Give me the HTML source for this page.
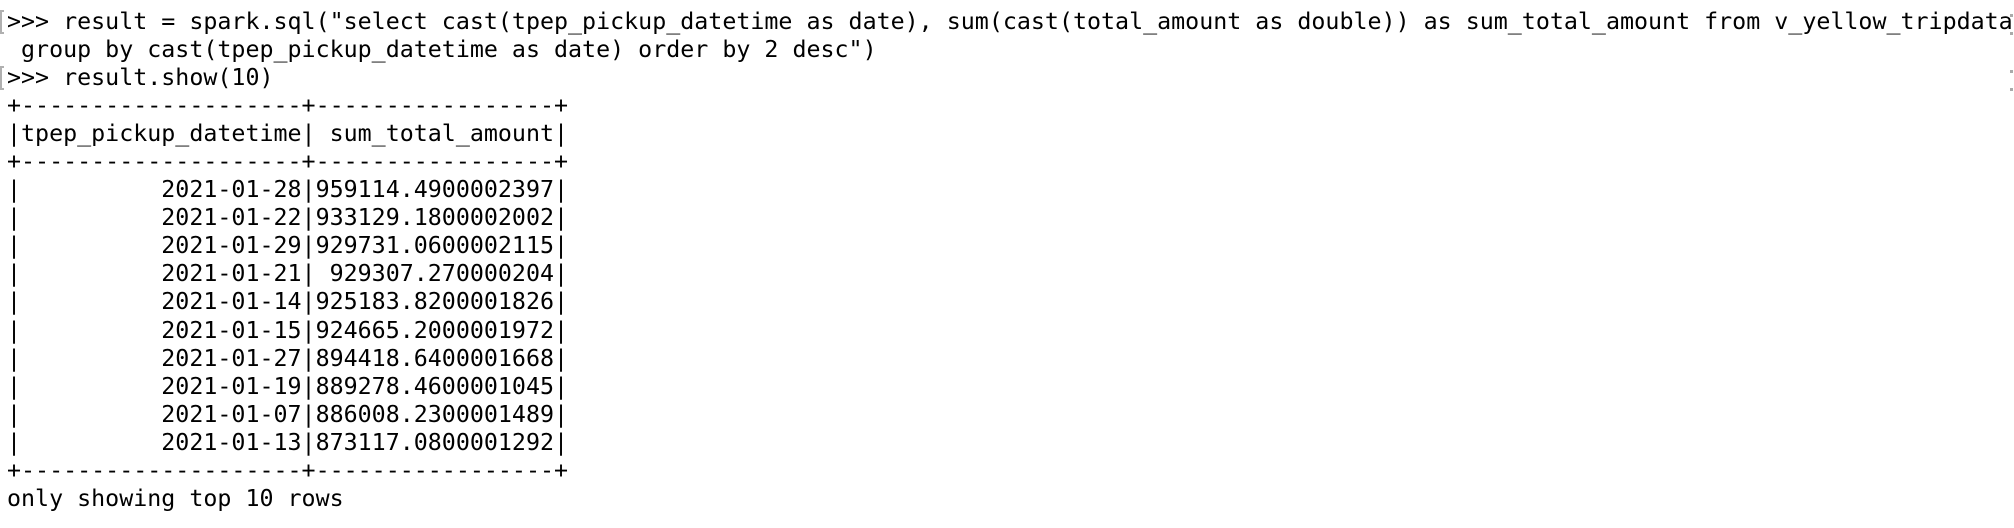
<!DOCTYPE html>
<html><head><meta charset="utf-8"><style>
html,body{margin:0;padding:0;background:#fff;width:2014px;height:528px;overflow:hidden;position:relative}
pre{margin:0;position:absolute;left:7px;top:8px;font-family:"DejaVu Sans Mono","Liberation Mono",monospace;font-size:23.3px;line-height:28.05px;color:#000;white-space:pre}
.br{position:absolute;left:0;width:4px;height:24px;border:2px solid #b0b0b0;border-right:none;box-sizing:border-box}
.rm{position:absolute;left:2010px;width:3px;height:3px;background:#aaa}
</style></head><body>
<div class="br" style="top:10px"></div>
<div class="br" style="top:66px"></div>
<div class="rm" style="top:14px"></div>
<div class="rm" style="top:32px"></div>
<div class="rm" style="top:70px"></div>
<div class="rm" style="top:88px"></div>
<pre>&gt;&gt;&gt; result = spark.sql("select cast(tpep_pickup_datetime as date), sum(cast(total_amount as double)) as sum_total_amount from v_yellow_tripdata
 group by cast(tpep_pickup_datetime as date) order by 2 desc")
&gt;&gt;&gt; result.show(10)
+--------------------+-----------------+
|tpep_pickup_datetime| sum_total_amount|
+--------------------+-----------------+
|          2021-01-28|959114.4900002397|
|          2021-01-22|933129.1800002002|
|          2021-01-29|929731.0600002115|
|          2021-01-21| 929307.270000204|
|          2021-01-14|925183.8200001826|
|          2021-01-15|924665.2000001972|
|          2021-01-27|894418.6400001668|
|          2021-01-19|889278.4600001045|
|          2021-01-07|886008.2300001489|
|          2021-01-13|873117.0800001292|
+--------------------+-----------------+
only showing top 10 rows</pre>
</body></html>
